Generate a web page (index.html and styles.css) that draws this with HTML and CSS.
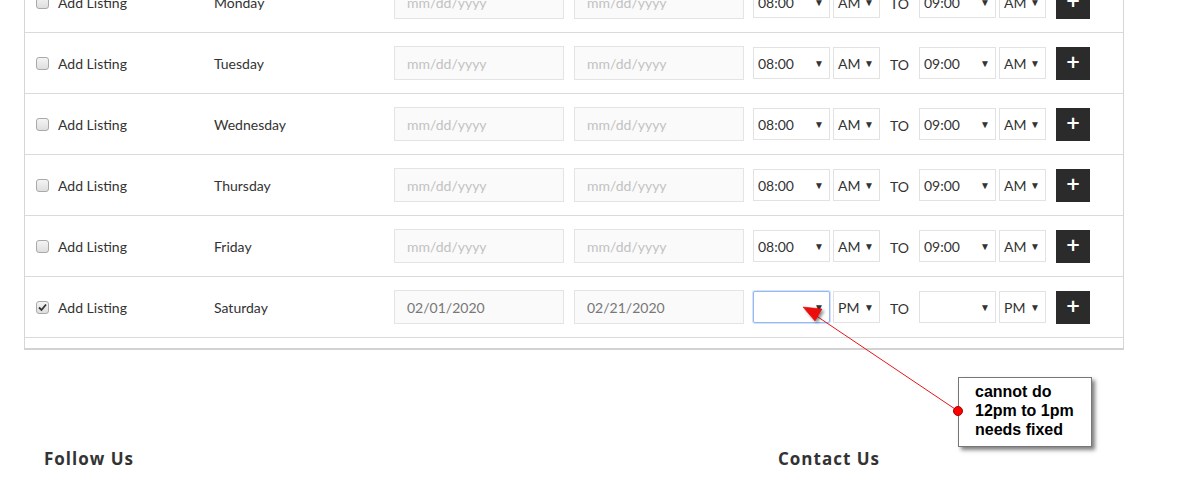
FILE: index.html
```html
<!DOCTYPE html>
<html>
<head>
    <title>Listing Schedule</title>
    <link rel="stylesheet" href="styles.css">
</head>
<body>
    <div class="schedule">
        <div class="row">
            <span class="check"></span>
            <span class="label">Add Listing</span>
            <span class="day">Monday</span>
            <input class="date" type="text" placeholder="mm/dd/yyyy">
            <input class="date" type="text" placeholder="mm/dd/yyyy">
            <div class="select time">08:00<span class="caret">&#9660;</span></div>
            <div class="select ampm">AM<span class="caret">&#9660;</span></div>
            <span class="to">TO</span>
            <div class="select time">09:00<span class="caret">&#9660;</span></div>
            <div class="select ampm">AM<span class="caret">&#9660;</span></div>
            <button class="add-btn">+</button>
        </div>
        <div class="row">
            <span class="check"></span>
            <span class="label">Add Listing</span>
            <span class="day">Tuesday</span>
            <input class="date" type="text" placeholder="mm/dd/yyyy">
            <input class="date" type="text" placeholder="mm/dd/yyyy">
            <div class="select time">08:00<span class="caret">&#9660;</span></div>
            <div class="select ampm">AM<span class="caret">&#9660;</span></div>
            <span class="to">TO</span>
            <div class="select time">09:00<span class="caret">&#9660;</span></div>
            <div class="select ampm">AM<span class="caret">&#9660;</span></div>
            <button class="add-btn">+</button>
        </div>
        <div class="row">
            <span class="check"></span>
            <span class="label">Add Listing</span>
            <span class="day">Wednesday</span>
            <input class="date" type="text" placeholder="mm/dd/yyyy">
            <input class="date" type="text" placeholder="mm/dd/yyyy">
            <div class="select time">08:00<span class="caret">&#9660;</span></div>
            <div class="select ampm">AM<span class="caret">&#9660;</span></div>
            <span class="to">TO</span>
            <div class="select time">09:00<span class="caret">&#9660;</span></div>
            <div class="select ampm">AM<span class="caret">&#9660;</span></div>
            <button class="add-btn">+</button>
        </div>
        <div class="row">
            <span class="check"></span>
            <span class="label">Add Listing</span>
            <span class="day">Thursday</span>
            <input class="date" type="text" placeholder="mm/dd/yyyy">
            <input class="date" type="text" placeholder="mm/dd/yyyy">
            <div class="select time">08:00<span class="caret">&#9660;</span></div>
            <div class="select ampm">AM<span class="caret">&#9660;</span></div>
            <span class="to">TO</span>
            <div class="select time">09:00<span class="caret">&#9660;</span></div>
            <div class="select ampm">AM<span class="caret">&#9660;</span></div>
            <button class="add-btn">+</button>
        </div>
        <div class="row">
            <span class="check"></span>
            <span class="label">Add Listing</span>
            <span class="day">Friday</span>
            <input class="date" type="text" placeholder="mm/dd/yyyy">
            <input class="date" type="text" placeholder="mm/dd/yyyy">
            <div class="select time">08:00<span class="caret">&#9660;</span></div>
            <div class="select ampm">AM<span class="caret">&#9660;</span></div>
            <span class="to">TO</span>
            <div class="select time">09:00<span class="caret">&#9660;</span></div>
            <div class="select ampm">AM<span class="caret">&#9660;</span></div>
            <button class="add-btn">+</button>
        </div>
        <div class="row">
            <span class="check checked">
                <svg width="9" height="9" viewBox="0 0 9 9"><path d="M1 4.5 L3.5 7 L8 1.5" fill="none" stroke="#333" stroke-width="1.8"/></svg>
            </span>
            <span class="label">Add Listing</span>
            <span class="day">Saturday</span>
            <input class="date" type="text" value="02/01/2020">
            <input class="date" type="text" value="02/21/2020">
            <div class="select time focused"><span class="caret">&#9660;</span></div>
            <div class="select ampm">PM<span class="caret">&#9660;</span></div>
            <span class="to">TO</span>
            <div class="select time"><span class="caret">&#9660;</span></div>
            <div class="select ampm">PM<span class="caret">&#9660;</span></div>
            <button class="add-btn">+</button>
        </div>
    </div>

    <div class="footer">
        <h3>Follow Us</h3>
        <h3>Contact Us</h3>
    </div>

    <!-- annotation -->
    <svg class="arrow" width="1196" height="481" viewBox="0 0 1196 481">
        <defs>
            <filter id="shade" x="-20%" y="-20%" width="150%" height="150%">
                <feDropShadow dx="2" dy="2" stdDeviation="1.5" flood-color="#000" flood-opacity="0.45"/>
            </filter>
        </defs>
        <line x1="958" y1="411" x2="815" y2="315" stroke="#e8141b" stroke-width="1"/>
        <polygon points="803,307 822,309 815,321" fill="#ee1111" stroke="#c00" stroke-width="0.5" filter="url(#shade)"/>
    </svg>
    <div class="callout">cannot do<br>12pm to 1pm<br>needs fixed</div>
    <span class="dot"></span>
</body>
</html>
```

FILE: styles.css
```css
body {
    margin: 0;
    font-family: Lato, "Open Sans", sans-serif;
    color: #333;
    background: #fff;
    position: relative;
    height: 481px;
    overflow: hidden;
}
.schedule {
    margin: -28px 0 0 24px;
    width: 1100px;
    box-sizing: border-box;
    border: 1px solid #d6d6d6;
    border-top: none;
    border-bottom: 2px solid #d2d2d2;
    padding-bottom: 10px;
}
.row {
    display: flex;
    align-items: center;
    height: 60px;
    padding-left: 11px;
    border-bottom: 1px solid #dadada;
    font-size: 14px;
}
.check {
    width: 13px;
    height: 13px;
    box-sizing: border-box;
    border: 1px solid #a9a9a9;
    border-radius: 3px;
    background: linear-gradient(#f4f4f4, #dedede);
    margin-right: 9px;
    display: flex;
    align-items: center;
    justify-content: center;
}
.label {
    width: 156px;
}
.day {
    width: 180px;
}
.date {
    width: 170px;
    height: 34px;
    box-sizing: border-box;
    border: 1px solid #e4e4e4;
    background: #fafafa;
    padding: 0 12px;
    font-family: Lato, sans-serif;
    font-size: 14px;
    color: #777;
    margin: 0 10px 0 0;
    outline: none;
}
.date::placeholder {
    color: #c2c2c2;
}
.date + .date {
    margin-right: 9px;
}
.select {
    height: 32px;
    box-sizing: border-box;
    border: 1px solid #e2e2e2;
    background: #fff;
    display: flex;
    align-items: center;
    padding: 0 0 0 4px;
    position: relative;
    margin-right: 3px;
}
.select.time {
    width: 77px;
}
.select.ampm {
    width: 47px;
}
.select.focused {
    border-color: #97b7ee;
    border-radius: 2px;
    box-shadow: 0 0 0 1px #d4e3fb;
}
.caret {
    position: absolute;
    right: 5px;
    top: 9px;
    font-size: 10px;
    color: #333;
}
.to {
    width: 29px;
    padding-left: 7px;
    padding-top: 3px;
}
.add-btn {
    width: 34px;
    height: 33px;
    margin-left: 7px;
    border: none;
    background: #2b2b2b;
    color: #fff;
    font-size: 18px;
    font-weight: bold;
    font-family: "DejaVu Sans", sans-serif;
    line-height: 1;
    padding: 0 0 3px;
}
.footer {
    display: grid;
    grid-template-columns: 734px 1fr;
    padding: 97px 0 0 44px;
}
.footer h3 {
    margin: 0;
    font-family: "Open Sans", sans-serif;
    font-weight: bold;
    font-size: 17px;
    letter-spacing: 1px;
    color: #333;
    line-height: 24px;
}
.arrow {
    position: absolute;
    left: 0;
    top: 0;
}
.callout {
    position: absolute;
    left: 958px;
    top: 377px;
    width: 134px;
    height: 70px;
    box-sizing: border-box;
    border: 1px solid #777;
    background: #fff;
    box-shadow: 3px 3px 4px rgba(0, 0, 0, 0.5);
    padding: 4px 0 0 16px;
    font-family: "Liberation Sans", Arial, sans-serif;
    font-weight: bold;
    font-size: 16px;
    line-height: 19px;
    color: #000;
}
.dot {
    position: absolute;
    left: 953px;
    top: 406px;
    width: 10px;
    height: 10px;
    box-sizing: border-box;
    border-radius: 50%;
    background: #ff0000;
    border: 1px solid #a00;
}
```
